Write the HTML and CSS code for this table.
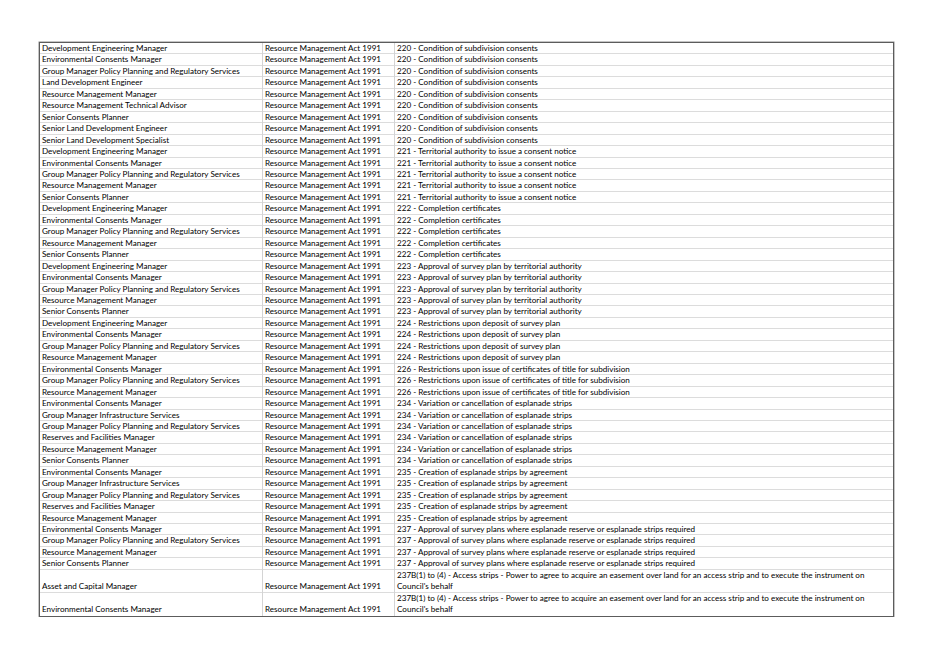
FILE: index.html
```html
<!DOCTYPE html>
<html lang="en">
<head>
<meta charset="utf-8">
<title>Delegations</title>
<link rel="stylesheet" href="styles.css">
</head>
<body>
<div class="sheet">
  <div class="c">Development Engineering Manager</div><div class="c">Resource Management Act 1991</div><div class="c">220 - Condition of subdivision consents</div>
  <div class="c">Environmental Consents Manager</div><div class="c">Resource Management Act 1991</div><div class="c">220 - Condition of subdivision consents</div>
  <div class="c">Group Manager Policy Planning and Regulatory Services</div><div class="c">Resource Management Act 1991</div><div class="c">220 - Condition of subdivision consents</div>
  <div class="c">Land Development Engineer</div><div class="c">Resource Management Act 1991</div><div class="c">220 - Condition of subdivision consents</div>
  <div class="c">Resource Management Manager</div><div class="c">Resource Management Act 1991</div><div class="c">220 - Condition of subdivision consents</div>
  <div class="c">Resource Management Technical Advisor</div><div class="c">Resource Management Act 1991</div><div class="c">220 - Condition of subdivision consents</div>
  <div class="c">Senior Consents Planner</div><div class="c">Resource Management Act 1991</div><div class="c">220 - Condition of subdivision consents</div>
  <div class="c">Senior Land Development Engineer</div><div class="c">Resource Management Act 1991</div><div class="c">220 - Condition of subdivision consents</div>
  <div class="c">Senior Land Development Specialist</div><div class="c">Resource Management Act 1991</div><div class="c">220 - Condition of subdivision consents</div>
  <div class="c">Development Engineering Manager</div><div class="c">Resource Management Act 1991</div><div class="c">221 - Territorial authority to issue a consent notice</div>
  <div class="c">Environmental Consents Manager</div><div class="c">Resource Management Act 1991</div><div class="c">221 - Territorial authority to issue a consent notice</div>
  <div class="c">Group Manager Policy Planning and Regulatory Services</div><div class="c">Resource Management Act 1991</div><div class="c">221 - Territorial authority to issue a consent notice</div>
  <div class="c">Resource Management Manager</div><div class="c">Resource Management Act 1991</div><div class="c">221 - Territorial authority to issue a consent notice</div>
  <div class="c">Senior Consents Planner</div><div class="c">Resource Management Act 1991</div><div class="c">221 - Territorial authority to issue a consent notice</div>
  <div class="c">Development Engineering Manager</div><div class="c">Resource Management Act 1991</div><div class="c">222 - Completion certificates</div>
  <div class="c">Environmental Consents Manager</div><div class="c">Resource Management Act 1991</div><div class="c">222 - Completion certificates</div>
  <div class="c">Group Manager Policy Planning and Regulatory Services</div><div class="c">Resource Management Act 1991</div><div class="c">222 - Completion certificates</div>
  <div class="c">Resource Management Manager</div><div class="c">Resource Management Act 1991</div><div class="c">222 - Completion certificates</div>
  <div class="c">Senior Consents Planner</div><div class="c">Resource Management Act 1991</div><div class="c">222 - Completion certificates</div>
  <div class="c">Development Engineering Manager</div><div class="c">Resource Management Act 1991</div><div class="c">223 - Approval of survey plan by territorial authority</div>
  <div class="c">Environmental Consents Manager</div><div class="c">Resource Management Act 1991</div><div class="c">223 - Approval of survey plan by territorial authority</div>
  <div class="c">Group Manager Policy Planning and Regulatory Services</div><div class="c">Resource Management Act 1991</div><div class="c">223 - Approval of survey plan by territorial authority</div>
  <div class="c">Resource Management Manager</div><div class="c">Resource Management Act 1991</div><div class="c">223 - Approval of survey plan by territorial authority</div>
  <div class="c">Senior Consents Planner</div><div class="c">Resource Management Act 1991</div><div class="c">223 - Approval of survey plan by territorial authority</div>
  <div class="c">Development Engineering Manager</div><div class="c">Resource Management Act 1991</div><div class="c">224 - Restrictions upon deposit of survey plan</div>
  <div class="c">Environmental Consents Manager</div><div class="c">Resource Management Act 1991</div><div class="c">224 - Restrictions upon deposit of survey plan</div>
  <div class="c">Group Manager Policy Planning and Regulatory Services</div><div class="c">Resource Management Act 1991</div><div class="c">224 - Restrictions upon deposit of survey plan</div>
  <div class="c">Resource Management Manager</div><div class="c">Resource Management Act 1991</div><div class="c">224 - Restrictions upon deposit of survey plan</div>
  <div class="c">Environmental Consents Manager</div><div class="c">Resource Management Act 1991</div><div class="c">226 - Restrictions upon issue of certificates of title for subdivision</div>
  <div class="c">Group Manager Policy Planning and Regulatory Services</div><div class="c">Resource Management Act 1991</div><div class="c">226 - Restrictions upon issue of certificates of title for subdivision</div>
  <div class="c">Resource Management Manager</div><div class="c">Resource Management Act 1991</div><div class="c">226 - Restrictions upon issue of certificates of title for subdivision</div>
  <div class="c">Environmental Consents Manager</div><div class="c">Resource Management Act 1991</div><div class="c">234 - Variation or cancellation of esplanade strips</div>
  <div class="c">Group Manager Infrastructure Services</div><div class="c">Resource Management Act 1991</div><div class="c">234 - Variation or cancellation of esplanade strips</div>
  <div class="c">Group Manager Policy Planning and Regulatory Services</div><div class="c">Resource Management Act 1991</div><div class="c">234 - Variation or cancellation of esplanade strips</div>
  <div class="c">Reserves and Facilities Manager</div><div class="c">Resource Management Act 1991</div><div class="c">234 - Variation or cancellation of esplanade strips</div>
  <div class="c">Resource Management Manager</div><div class="c">Resource Management Act 1991</div><div class="c">234 - Variation or cancellation of esplanade strips</div>
  <div class="c">Senior Consents Planner</div><div class="c">Resource Management Act 1991</div><div class="c">234 - Variation or cancellation of esplanade strips</div>
  <div class="c">Environmental Consents Manager</div><div class="c">Resource Management Act 1991</div><div class="c">235 - Creation of esplanade strips by agreement</div>
  <div class="c">Group Manager Infrastructure Services</div><div class="c">Resource Management Act 1991</div><div class="c">235 - Creation of esplanade strips by agreement</div>
  <div class="c">Group Manager Policy Planning and Regulatory Services</div><div class="c">Resource Management Act 1991</div><div class="c">235 - Creation of esplanade strips by agreement</div>
  <div class="c">Reserves and Facilities Manager</div><div class="c">Resource Management Act 1991</div><div class="c">235 - Creation of esplanade strips by agreement</div>
  <div class="c">Resource Management Manager</div><div class="c">Resource Management Act 1991</div><div class="c">235 - Creation of esplanade strips by agreement</div>
  <div class="c">Environmental Consents Manager</div><div class="c">Resource Management Act 1991</div><div class="c">237 - Approval of survey plans where esplanade reserve or esplanade strips required</div>
  <div class="c">Group Manager Policy Planning and Regulatory Services</div><div class="c">Resource Management Act 1991</div><div class="c">237 - Approval of survey plans where esplanade reserve or esplanade strips required</div>
  <div class="c">Resource Management Manager</div><div class="c">Resource Management Act 1991</div><div class="c">237 - Approval of survey plans where esplanade reserve or esplanade strips required</div>
  <div class="c">Senior Consents Planner</div><div class="c">Resource Management Act 1991</div><div class="c">237 - Approval of survey plans where esplanade reserve or esplanade strips required</div>
  <div class="c">Asset and Capital Manager</div><div class="c">Resource Management Act 1991</div><div class="c wrap">237B(1) to (4) - Access strips - Power to agree to acquire an easement over land for an access strip and to execute the instrument on<br>Council's behalf</div>
  <div class="c last">Environmental Consents Manager</div><div class="c last">Resource Management Act 1991</div><div class="c wrap last">237B(1) to (4) - Access strips - Power to agree to acquire an easement over land for an access strip and to execute the instrument on<br>Council's behalf</div>
</div>
</body>
</html>
```

FILE: styles.css
```css
html, body {
  margin: 0;
  padding: 0;
  background: #ffffff;
}

body {
  font-family: Lato, "Liberation Sans", sans-serif;
  font-size: 8.1px;
  color: #000000;
}

.sheet {
  display: grid;
  grid-template-columns: 222px 132px 1fr;
  width: 855px;
  box-sizing: border-box;
  margin: 42px 0 0 39px;
  border: 1px solid #5c5c5c;
  box-shadow: 0 0 0 0.5px #8a8a8a;
}

.c {
  display: flex;
  align-items: flex-end;
  line-height: 11.46px;
  padding: 0 2px 0 2px;
  white-space: nowrap;
  overflow: hidden;
  box-shadow: inset 0 -1px 0 #dcdcdc;
}

.c:nth-child(3n+2),
.c:nth-child(3n) {
  border-left: 1px solid #d4d4d4;
}

.c:nth-child(3n) {
  padding-left: 2px;
}

.c.wrap {
  display: block;
  white-space: normal;
}

.c.last {
  box-shadow: none;
}
```
